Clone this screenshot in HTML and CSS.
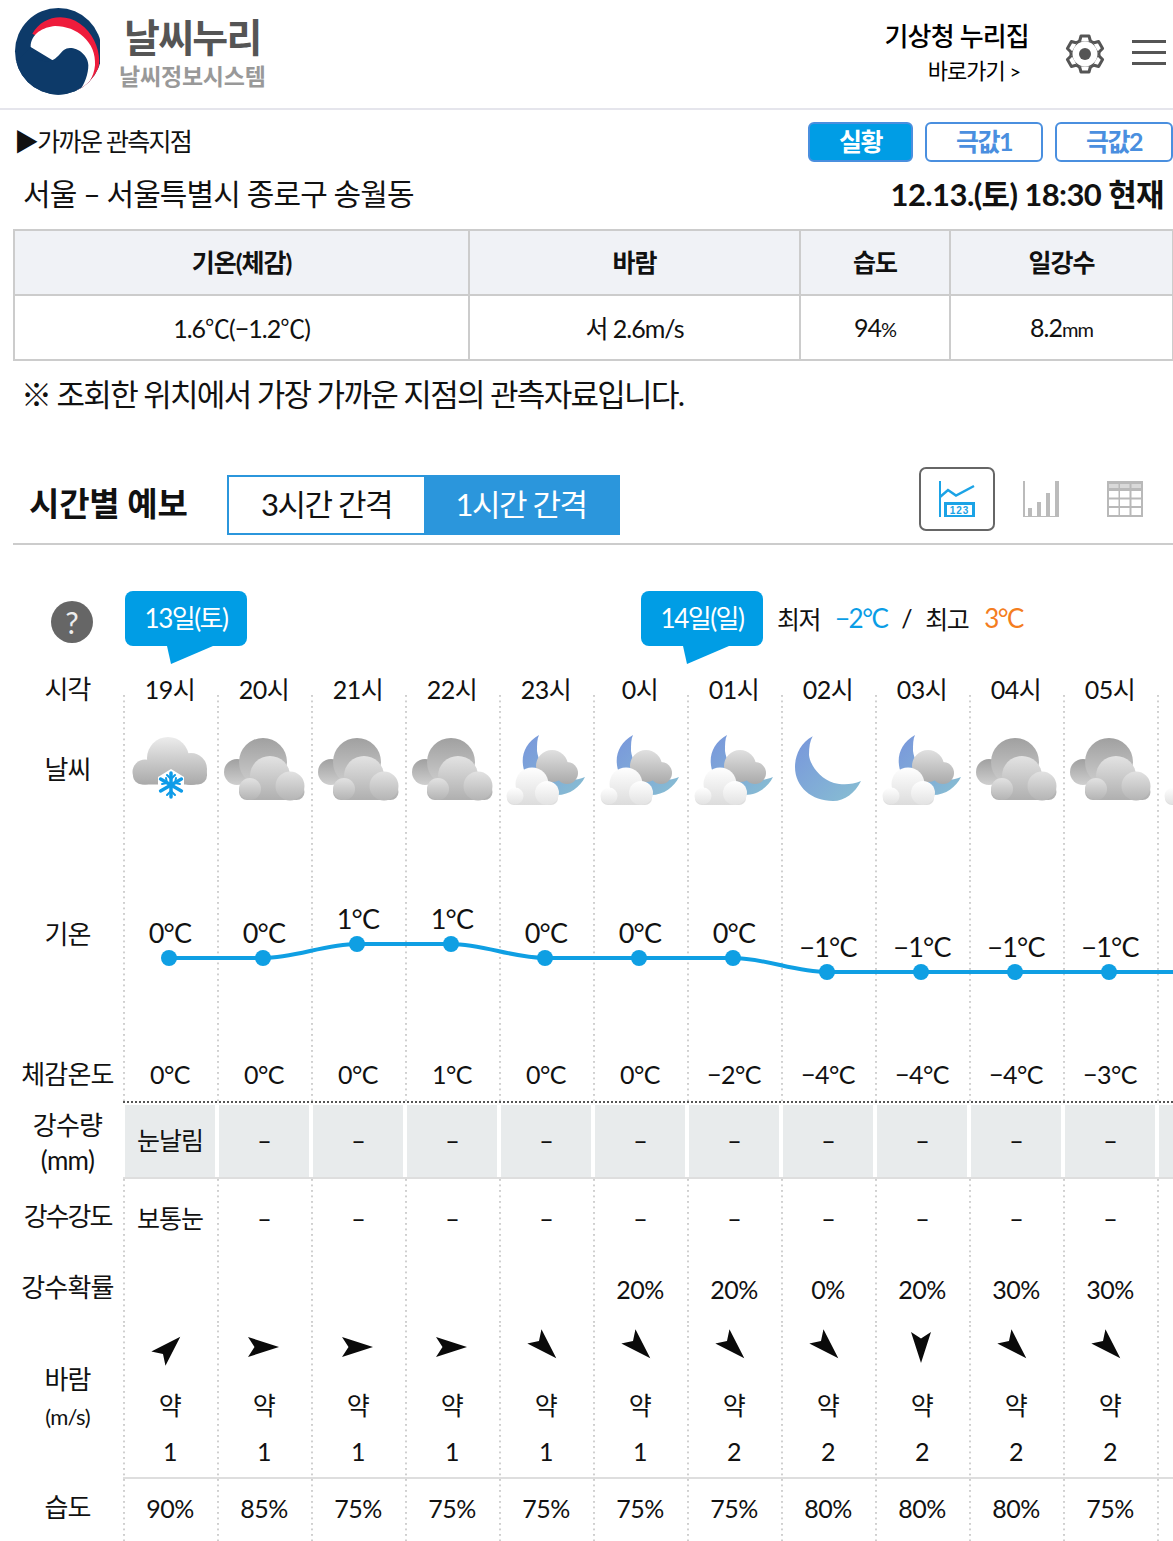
FILE: index.html
```html
<!DOCTYPE html>
<html lang="ko">
<head>
<meta charset="utf-8">
<title>날씨누리</title>
<link rel="stylesheet" href="styles.css">
</head>
<body>
<svg class="defs" width="0" height="0" aria-hidden="true">
  <defs>
    <clipPath id="logoClip"><circle cx="175" cy="148" r="130"/></clipPath>
    <linearGradient id="gLight" gradientUnits="userSpaceOnUse" x1="0" y1="8" x2="0" y2="56"><stop offset="0" stop-color="#ececec"/><stop offset="1" stop-color="#a9a9a9"/></linearGradient>
    <linearGradient id="gBack" x1="0" y1="0" x2="0" y2="1"><stop offset="0" stop-color="#a0a0a0"/><stop offset="1" stop-color="#cfcfcf"/></linearGradient>
    <linearGradient id="gFront" gradientUnits="userSpaceOnUse" x1="0" y1="26" x2="0" y2="72"><stop offset="0" stop-color="#e4e4e4"/><stop offset="1" stop-color="#aeaeae"/></linearGradient>
    <linearGradient id="gBump" x1="0" y1="0" x2="0" y2="1"><stop offset="0" stop-color="#e2e2e2"/><stop offset="1" stop-color="#b4b4b4"/></linearGradient>
    <linearGradient id="gGrey" gradientUnits="userSpaceOnUse" x1="0" y1="21" x2="0" y2="56"><stop offset="0" stop-color="#e0e0e0"/><stop offset="1" stop-color="#a8a8a8"/></linearGradient>
    <linearGradient id="gWhite" gradientUnits="userSpaceOnUse" x1="0" y1="38" x2="0" y2="76"><stop offset="0" stop-color="#ffffff"/><stop offset="1" stop-color="#dcdcdc"/></linearGradient>
    <linearGradient id="gWhiteBump" x1="0" y1="0" x2="0" y2="1"><stop offset="0" stop-color="#ffffff"/><stop offset="1" stop-color="#e2e2e2"/></linearGradient>
    <linearGradient id="gMoon" x1="0" y1="0" x2="1" y2="1"><stop offset="0" stop-color="#7896dc"/><stop offset="1" stop-color="#88bfd2"/></linearGradient>
    <symbol id="i-snow" viewBox="0 0 94 80">
      <g fill="url(#gLight)"><circle cx="44" cy="29" r="21"/><circle cx="21" cy="43" r="12.500"/><circle cx="67" cy="40" r="16"/><rect x="9" y="36" width="74" height="19.500" rx="9"/></g>
      <polygon points="47,40 60,48 60,64 47,72 34,64 34,48" fill="#fff"/>
      <g stroke="#0e9be8" stroke-width="3.500" stroke-linecap="round">
        <line x1="47" y1="44" x2="47" y2="68"/><line x1="36.600" y1="50" x2="57.400" y2="62"/><line x1="57.400" y1="50" x2="36.600" y2="62"/>
        <path d="M43 46l4 4 4-4M43 66l4-4 4 4M38 55l5-1-1-5M56 55l-5-1 1-5" fill="none" stroke-width="2"/>
      </g>
    </symbol>
    <symbol id="i-cloud" viewBox="0 0 94 80">
      <circle cx="19" cy="43" r="13" fill="url(#gBack)"/>
      <circle cx="45" cy="33" r="24" fill="url(#gBack)"/>
      <g fill="url(#gFront)"><circle cx="52" cy="47" r="20"/><rect x="21" y="55" width="65.500" height="16" rx="8"/></g>
      <g fill="url(#gBump)"><circle cx="32" cy="60" r="11"/><circle cx="72" cy="57" r="14.500"/></g>
    </symbol>
    <symbol id="i-mooncloud" viewBox="0 0 94 80">
      <path d="M39 6C28 12 22.700 22 22.700 32C22.700 50 38 66 57 66C70 66 80 58 85 48C76 52 65 52 55 48C44 44 38 30 37 22C37 15 37 10 39 6Z" fill="url(#gMoon)"/>
      <g fill="url(#gGrey)"><circle cx="52" cy="37" r="16"/><circle cx="67" cy="44" r="11"/></g>
      <g fill="url(#gWhite)"><circle cx="32" cy="55" r="16.500"/><rect x="7" y="62" width="51" height="14" rx="7"/></g>
      <g fill="url(#gWhiteBump)"><circle cx="15" cy="67" r="8.500"/><circle cx="47" cy="64" r="12"/></g>
    </symbol>
    <symbol id="i-moon" viewBox="0 0 94 80">
      <path d="M30.700 7.300C18 14 13 27 13 38C13 58 30 72 51 72C63 72 73 64 79 52C70 56 60 56 52 54C38 50 28 36 27 26C27 18 28 12 30.700 7.300Z" fill="url(#gMoon)"/>
    </symbol>
    <symbol id="i-arrow" viewBox="0 0 44 44">
      <path d="M38 22L7 12L13.500 22L7 32Z" fill="#0a0a0a"/>
    </symbol>
  </defs>
</svg>

<div class="page">
  <header class="top">
    <div class="brand">
      <svg class="logo" viewBox="0 0 300 300" aria-hidden="true">
        <circle cx="175" cy="148" r="130" fill="#0d3a69"/>
        <g clip-path="url(#logoClip)">
          <path d="M97 95C125 45 190 30 240 65C290 100 310 170 290 215C280 240 260 260 235 272L200 150Z" fill="#ee1c3c"/>
          <path d="M92 135C92 95 130 75 165 72C230 72 290 120 285 190C282 225 262 255 235 272L200 200Z" fill="#fff"/>
          <path d="M92 135C92 158 110 178 140 178C178 178 180 138 210 138C235 138 265 160 265 190C265 215 255 245 235 272C200 300 80 300 40 190Z" fill="#0d3a69"/>
        </g>
      </svg>
      <div class="brand-text">
        <div class="brand-main">날씨누리</div>
        <div class="brand-sub">날씨정보시스템</div>
      </div>
    </div>
    <div class="top-right">
      <div class="home">
        <div class="home-title">기상청 누리집</div>
        <div class="home-link">바로가기 <span class="chev">&gt;</span></div>
      </div>
      <svg class="gear" viewBox="0 0 40 40" aria-hidden="true">
        <circle cx="20" cy="20" r="14" fill="#fff" stroke="#555" stroke-width="3"/>
        <g fill="#fff" stroke="#555" stroke-width="3" stroke-linejoin="round">
          <path d="M14.500 7.500L16 2H24L25.500 7.500"/>
          <path d="M14.500 7.500L16 2H24L25.500 7.500" transform="rotate(60 20 20)"/>
          <path d="M14.500 7.500L16 2H24L25.500 7.500" transform="rotate(120 20 20)"/>
          <path d="M14.500 7.500L16 2H24L25.500 7.500" transform="rotate(180 20 20)"/>
          <path d="M14.500 7.500L16 2H24L25.500 7.500" transform="rotate(240 20 20)"/>
          <path d="M14.500 7.500L16 2H24L25.500 7.500" transform="rotate(300 20 20)"/>
        </g>
        <circle cx="20" cy="20" r="6" fill="#555"/>
      </svg>
      <div class="burger"><span></span><span></span><span></span></div>
    </div>
  </header>

  <section class="now">
    <div class="now-head">
      <div class="now-title">▶가까운 관측지점</div>
      <div class="pills">
        <span class="pill pill-on">실황</span>
        <span class="pill">극값1</span>
        <span class="pill">극값2</span>
      </div>
    </div>
    <div class="place-row">
      <div class="place">서울 – 서울특별시 종로구 송월동</div>
      <div class="stamp">12.13.(토) 18:30 현재</div>
    </div>
    <table class="obs">
      <colgroup><col class="c1"><col class="c2"><col class="c3"><col class="c4"></colgroup>
      <thead><tr><th>기온(체감)</th><th>바람</th><th>습도</th><th>일강수</th></tr></thead>
      <tbody><tr>
        <td>1.6<small class="deg">℃</small>(−1.2<small class="deg">℃</small>)</td>
        <td>서 2.6m/s</td>
        <td>94<small>%</small></td>
        <td>8.2<small>mm</small></td>
      </tr></tbody>
    </table>
    <p class="note">※ 조회한 위치에서 가장 가까운 지점의 관측자료입니다.</p>
  </section>

  <section class="hourly">
    <div class="hourly-head">
      <h2 class="hourly-title">시간별 예보</h2>
      <div class="tabs"><span class="tab">3시간 간격</span><span class="tab tab-on">1시간 간격</span></div>
      <div class="views">
        <span class="view view-on">
          <svg class="view-icon" viewBox="0 0 36 36" aria-hidden="true">
            <path d="M1 0V36" stroke="#1ba3e6" stroke-width="2" fill="none"/>
            <path d="M1 16L9 9L17 14.500L35 5" stroke="#1ba3e6" stroke-width="2.500" fill="none"/>
            <rect x="5" y="21" width="31" height="15" fill="#1ba3e6"/>
            <rect x="8" y="24" width="25" height="10" fill="#fff"/>
            <text x="20.500" y="32.500" class="view-num">123</text>
          </svg>
        </span>
        <span class="view">
          <svg class="view-icon" viewBox="0 0 36 36" aria-hidden="true">
            <path d="M1 0V36H36" stroke="#bbb" stroke-width="2" fill="none"/>
            <g fill="#bbb"><rect x="5" y="27" width="4" height="9"/><rect x="14" y="21" width="4" height="15"/><rect x="23" y="12" width="4" height="24"/><rect x="32" y="0" width="4" height="36"/></g>
          </svg>
        </span>
        <span class="view">
          <svg class="view-icon" viewBox="0 0 36 36" aria-hidden="true">
            <rect width="36" height="36" fill="#b9b9b9"/>
            <g fill="#d9d9d9"><rect x="2" y="3" width="9.500" height="4"/><rect x="13" y="3" width="9.500" height="4"/><rect x="24.500" y="3" width="9.500" height="4"/></g>
            <g fill="#fff">
              <rect x="2" y="10" width="9.500" height="6.500"/><rect x="13" y="10" width="9.500" height="6.500"/><rect x="24.500" y="10" width="9.500" height="6.500"/>
              <rect x="2" y="18.500" width="9.500" height="6.500"/><rect x="13" y="18.500" width="9.500" height="6.500"/><rect x="24.500" y="18.500" width="9.500" height="6.500"/>
              <rect x="2" y="27" width="9.500" height="7"/><rect x="13" y="27" width="9.500" height="7"/><rect x="24.500" y="27" width="9.500" height="7"/>
            </g>
          </svg>
        </span>
      </div>
    </div>

    <div class="dates">
      <div class="help-wrap"><span class="help">?</span></div>
      <span class="flag">13일(토)</span>
      <span class="flag flag-next">14일(일)</span>
      <span class="range">최저<b class="low">−2°C</b><i class="sep">/</i>최고<b class="high">3°C</b></span>
    </div>

    <div class="row">
      <div class="lbl lbl-hour">시각</div>
      <div class="cells">
        <div class="c hour">19시</div><div class="c hour">20시</div><div class="c hour">21시</div><div class="c hour">22시</div><div class="c hour">23시</div><div class="c hour">0시</div><div class="c hour">01시</div><div class="c hour">02시</div><div class="c hour">03시</div><div class="c hour">04시</div><div class="c hour">05시</div><div class="c hour"></div>
      </div>
    </div>

    <div class="row">
      <div class="lbl lbl-sky">날씨</div>
      <div class="cells">
        <div class="c sky"><svg class="wx"><use href="#i-snow"/></svg></div>
        <div class="c sky"><svg class="wx"><use href="#i-cloud"/></svg></div>
        <div class="c sky"><svg class="wx"><use href="#i-cloud"/></svg></div>
        <div class="c sky"><svg class="wx"><use href="#i-cloud"/></svg></div>
        <div class="c sky"><svg class="wx"><use href="#i-mooncloud"/></svg></div>
        <div class="c sky"><svg class="wx"><use href="#i-mooncloud"/></svg></div>
        <div class="c sky"><svg class="wx"><use href="#i-mooncloud"/></svg></div>
        <div class="c sky"><svg class="wx"><use href="#i-moon"/></svg></div>
        <div class="c sky"><svg class="wx"><use href="#i-mooncloud"/></svg></div>
        <div class="c sky"><svg class="wx"><use href="#i-cloud"/></svg></div>
        <div class="c sky"><svg class="wx"><use href="#i-cloud"/></svg></div>
        <div class="c sky"><svg class="wx"><use href="#i-mooncloud"/></svg></div>
      </div>
    </div>

    <div class="row row-temp">
      <div class="lbl lbl-temp">기온</div>
      <div class="cells">
        <div class="c temp t0">0°C</div><div class="c temp t0">0°C</div><div class="c temp t1">1°C</div><div class="c temp t1">1°C</div><div class="c temp t0">0°C</div><div class="c temp t0">0°C</div><div class="c temp t0">0°C</div><div class="c temp tm">−1°C</div><div class="c temp tm">−1°C</div><div class="c temp tm">−1°C</div><div class="c temp tm">−1°C</div><div class="c temp"></div>
      </div>
      <svg class="temp-line" viewBox="0 0 1173 170" aria-hidden="true">
        <path d="M169 78H263C295 78 325 64 357 64H451C483 64 513 78 545 78H733C765 78 795 92 827 92H1173" fill="none" stroke="#0f9fe3" stroke-width="4"/>
        <g fill="#0f9fe3"><circle cx="169" cy="78" r="8"/><circle cx="263" cy="78" r="8"/><circle cx="357" cy="64" r="8"/><circle cx="451" cy="64" r="8"/><circle cx="545" cy="78" r="8"/><circle cx="639" cy="78" r="8"/><circle cx="733" cy="78" r="8"/><circle cx="827" cy="92" r="8"/><circle cx="921" cy="92" r="8"/><circle cx="1015" cy="92" r="8"/><circle cx="1109" cy="92" r="8"/></g>
      </svg>
    </div>

    <div class="row">
      <div class="lbl lbl-feel">체감온도</div>
      <div class="cells cells-dark">
        <div class="c feel">0°C</div><div class="c feel">0°C</div><div class="c feel">0°C</div><div class="c feel">1°C</div><div class="c feel">0°C</div><div class="c feel">0°C</div><div class="c feel">−2°C</div><div class="c feel">−4°C</div><div class="c feel">−4°C</div><div class="c feel">−4°C</div><div class="c feel">−3°C</div><div class="c feel"></div>
      </div>
    </div>

    <div class="row">
      <div class="lbl lbl-rain">강수량<br>(mm)</div>
      <div class="cells cells-line cells-rain">
        <div class="c rain">눈날림</div><div class="c rain">–</div><div class="c rain">–</div><div class="c rain">–</div><div class="c rain">–</div><div class="c rain">–</div><div class="c rain">–</div><div class="c rain">–</div><div class="c rain">–</div><div class="c rain">–</div><div class="c rain">–</div><div class="c rain"></div>
      </div>
    </div>

    <div class="row">
      <div class="lbl lbl-power">강수강도</div>
      <div class="cells">
        <div class="c power">보통눈</div><div class="c power">–</div><div class="c power">–</div><div class="c power">–</div><div class="c power">–</div><div class="c power">–</div><div class="c power">–</div><div class="c power">–</div><div class="c power">–</div><div class="c power">–</div><div class="c power">–</div><div class="c power"></div>
      </div>
    </div>

    <div class="row">
      <div class="lbl lbl-prob">강수확률</div>
      <div class="cells">
        <div class="c prob"></div><div class="c prob"></div><div class="c prob"></div><div class="c prob"></div><div class="c prob"></div><div class="c prob">20%</div><div class="c prob">20%</div><div class="c prob">0%</div><div class="c prob">20%</div><div class="c prob">30%</div><div class="c prob">30%</div><div class="c prob"></div>
      </div>
    </div>

    <div class="row">
      <div class="lbl lbl-wind">바람<br><span class="unit">(m/s)</span></div>
      <div class="cells cells-line">
        <div class="c wind"><svg class="arrow ne"><use href="#i-arrow"/></svg><div class="wind-txt">약</div><div class="wind-txt">1</div></div>
        <div class="c wind"><svg class="arrow e"><use href="#i-arrow"/></svg><div class="wind-txt">약</div><div class="wind-txt">1</div></div>
        <div class="c wind"><svg class="arrow e"><use href="#i-arrow"/></svg><div class="wind-txt">약</div><div class="wind-txt">1</div></div>
        <div class="c wind"><svg class="arrow e"><use href="#i-arrow"/></svg><div class="wind-txt">약</div><div class="wind-txt">1</div></div>
        <div class="c wind"><svg class="arrow se"><use href="#i-arrow"/></svg><div class="wind-txt">약</div><div class="wind-txt">1</div></div>
        <div class="c wind"><svg class="arrow se"><use href="#i-arrow"/></svg><div class="wind-txt">약</div><div class="wind-txt">1</div></div>
        <div class="c wind"><svg class="arrow se"><use href="#i-arrow"/></svg><div class="wind-txt">약</div><div class="wind-txt">2</div></div>
        <div class="c wind"><svg class="arrow se"><use href="#i-arrow"/></svg><div class="wind-txt">약</div><div class="wind-txt">2</div></div>
        <div class="c wind"><svg class="arrow s"><use href="#i-arrow"/></svg><div class="wind-txt">약</div><div class="wind-txt">2</div></div>
        <div class="c wind"><svg class="arrow se"><use href="#i-arrow"/></svg><div class="wind-txt">약</div><div class="wind-txt">2</div></div>
        <div class="c wind"><svg class="arrow se"><use href="#i-arrow"/></svg><div class="wind-txt">약</div><div class="wind-txt">2</div></div>
        <div class="c wind"></div>
      </div>
    </div>

    <div class="row">
      <div class="lbl lbl-hum">습도</div>
      <div class="cells">
        <div class="c hum">90%</div><div class="c hum">85%</div><div class="c hum">75%</div><div class="c hum">75%</div><div class="c hum">75%</div><div class="c hum">75%</div><div class="c hum">75%</div><div class="c hum">80%</div><div class="c hum">80%</div><div class="c hum">80%</div><div class="c hum">75%</div><div class="c hum"></div>
      </div>
    </div>
  </section>
</div>
</body>
</html>
```

FILE: styles.css
```css
* { box-sizing: border-box; }
html, body { margin: 0; padding: 0; background: #fff; }
body { font-family: Lato, "Noto Sans CJK KR", "Noto Sans", sans-serif; color: #111; overflow: hidden; }
.defs { position: absolute; }
.page { width: 1173px; height: 1541px; overflow: hidden; }

/* header */
.top { display: flex; justify-content: space-between; height: 110px; border-bottom: 2px solid #e5e5ec; }
.brand { display: flex; align-items: center; }
.logo { width: 100px; height: 100px; margin-top: -4px; flex: none; display: block; }
.brand-text { display: flex; flex-direction: column; align-items: center; margin-left: 19px; }
.brand-main { font-size: 39px; font-weight: 700; color: #555; line-height: 50px; letter-spacing: -1.700px; margin-top: -7px; }
.brand-sub { font-size: 23px; font-weight: 700; color: #999; line-height: 28px; letter-spacing: -0.200px; }
.top-right { display: flex; align-items: center; padding-right: 7px; }
.home { text-align: right; margin-top: -2px; }
.home-title { font-size: 26px; font-weight: 500; line-height: 36px; letter-spacing: -0.800px; color: #000; }
.home-link { font-size: 22px; line-height: 34px; letter-spacing: -1px; margin-right: 9px; color: #000; }
.chev { font-size: 20px; }
.gear { width: 40px; height: 40px; margin-left: 36px; flex: none; }
.burger { width: 34px; margin-left: 27px; display: flex; flex-direction: column; gap: 8px; margin-top: -4px; }
.burger span { display: block; height: 3px; background: #555; }

/* current observation */
.now-head { display: flex; justify-content: space-between; align-items: center; padding: 12px 0 12px 14px; }
.now-title { font-size: 25px; letter-spacing: -1.700px; line-height: 36px; margin-top: -2px; }
.pills { display: flex; gap: 12px; }
.pill { width: 118px; height: 40px; border: 2px solid #4a8fdf; border-radius: 6px; color: #4a8fdf; font-size: 25px; font-weight: 700; line-height: 34px; text-align: center; letter-spacing: -1.500px; }
.pill-on { width: 105px; background: #009de5; color: #fff; }
.place-row { display: flex; justify-content: space-between; align-items: center; height: 40px; margin-top: -2px; padding: 0 9px 0 23px; }
.place { font-size: 30px; letter-spacing: -0.900px; }
.stamp { font-size: 31px; font-weight: 700; letter-spacing: -0.600px; }
.obs { width: 1159px; margin: 17px 0 0 13px; border-collapse: collapse; table-layout: fixed; font-size: 25px; }
.c1 { width: 455px; } .c2 { width: 331px; } .c3 { width: 150px; } .c4 { width: 223px; }
.obs th, .obs td { height: 65px; border: 2px solid #ccc; text-align: center; padding: 0 0 1px; letter-spacing: -1px; }
.obs th { background: #f0f2f6; font-weight: 700; padding-bottom: 3px; }
.obs small { font-size: 20px; }
.obs .deg { font-size: 25px; }
.note { margin: 13px 0 53px 21px; font-size: 31px; line-height: 40px; letter-spacing: -1.700px; }

/* hourly head */
.hourly-head { display: flex; align-items: flex-start; height: 78px; margin-left: 13px; border-bottom: 2px solid #ccc; }
.hourly-title { width: 158px; flex: none; white-space: nowrap; margin: 8px 0 0 16px; font-size: 33px; font-weight: 700; line-height: 56px; letter-spacing: -0.200px; }
.tabs { display: flex; margin: 8px 0 0 40px; border: 2px solid #2b96dc; height: 60px; }
.tab { width: 195px; text-align: center; font-size: 31px; line-height: 54px; letter-spacing: -1.500px; }
.tab-on { width: 194px; background: #2b96dc; color: #fff; }
.views { margin-left: auto; display: flex; padding-right: 10px; gap: 8px; }
.view { width: 76px; height: 64px; border: 2px solid transparent; border-radius: 7px; display: flex; align-items: center; justify-content: center; }
.view-on { border-color: #666; }
.view-icon { width: 36px; height: 36px; }
.view-num { font-size: 10px; font-weight: 700; fill: #1ba3e6; text-anchor: middle; letter-spacing: 1px; font-family: "Liberation Sans", sans-serif; }

/* date flags */
.dates { display: flex; align-items: center; margin-top: 46px; height: 55px; margin-bottom: 23px; }
.help-wrap { width: 125px; padding-left: 51px; padding-top: 7px; flex: none; }
.help { display: block; width: 42px; height: 42px; border-radius: 50%; background: #666; color: #eee; font-size: 30px; line-height: 42px; text-align: center; }
.flag { position: relative; width: 122px; height: 55px; border-radius: 8px; background: #009de5; color: #fff; font-size: 26px; line-height: 55px; text-align: center; letter-spacing: -1.500px; flex: none; }
.flag::after { content: ""; position: absolute; left: 42px; top: 55px; width: 46px; height: 18px; background: #009de5; clip-path: polygon(0 0, 100% 0, 4px 100%); }
.flag-next { margin-left: 394px; }
.range { margin-left: 14px; font-size: 25px; letter-spacing: -1.500px; display: flex; align-items: center; padding-bottom: 2px; }
.low { font-weight: 400; font-size: 26px; color: #0a9de6; margin-left: 15px; }
.high { font-weight: 400; font-size: 26px; color: #f47d20; margin-left: 16px; }
.sep { font-style: normal; margin: 0 14px; }

/* forecast rows: dotted column rule drawn as a repeating background */
.row { display: flex; position: relative; }
.lbl { width: 123px; flex: none; padding-left: 12px; text-align: center; font-size: 26px; letter-spacing: -0.800px; }
.cells { display: flex; flex: 1; min-width: 0; overflow: hidden; }
.c { flex: 0 0 94px; min-width: 0; padding: 0 2px; text-align: center; font-size: 25px; letter-spacing: -0.500px; background: linear-gradient(#cfcfcf 2px, transparent 2px) 0 0 / 2px 5.500px repeat-y; }

.lbl-hour { height: 42px; line-height: 40px; }
.c.hour { position: relative; height: 42px; line-height: 40px; background: none; }
.c.hour::after { content: ""; position: absolute; left: 0; top: 26px; bottom: 0; width: 2px; background: linear-gradient(#cfcfcf 2px, transparent 2px) 0 0 / 2px 5.500px repeat-y; }

.lbl-sky { padding-top: 42px; line-height: 32px; }
.c.sky { height: 169px; padding-top: 18px; }
.wx { display: block; width: 94px; height: 80px; margin-left: -1px; overflow: visible; }

.row-temp { height: 170px; }
.lbl-temp { padding-top: 37px; line-height: 34px; }
.c.temp { font-size: 27px; line-height: 34px; letter-spacing: -0.800px; }
.t0 { padding-top: 36px; }
.t1 { padding-top: 22px; }
.tm { padding-top: 50px; }
.temp-line { position: absolute; left: 0; top: 0; width: 1173px; height: 170px; }

.lbl-feel { line-height: 49px; }
.cells-dark { border-bottom: 2px dotted #555; }
.c.feel { height: 51px; line-height: 48px; }

.cells-line { border-bottom: 2px solid #dedede; }
.cells-rain { padding-top: 2px; }
.lbl-rain { padding-top: 5px; line-height: 35px; }
.c.rain { height: 72px; line-height: 70px; padding: 0; border-left: 2px solid #fff; border-right: 2px solid #fff; background: #e8ebec; background-clip: padding-box; letter-spacing: -1px; }

.lbl-power { padding-top: 17px; line-height: 40px; letter-spacing: -2px; }
.c.power { height: 76px; padding-top: 20px; line-height: 38px; letter-spacing: -1px; }

.lbl-prob { line-height: 64px; }
.c.prob { height: 70px; line-height: 68px; }

.lbl-wind { padding-top: 36px; line-height: 36px; }
.unit { font-size: 22px; }
.c.wind { height: 152px; }
.arrow { display: block; width: 44px; height: 44px; margin: 0 auto 13px; }
.arrow.e { transform: translate(-1px, 0); }
.arrow.ne { transform: translate(-1px, 1px) rotate(-45deg); }
.arrow.se { transform: translate(-1px, 0) rotate(45deg); }
.arrow.s { transform: translate(-1px, 0) rotate(90deg); }
.wind-txt { line-height: 46px; }

.lbl-hum { line-height: 56px; }
.c.hum { height: 62px; line-height: 58px; }
```
